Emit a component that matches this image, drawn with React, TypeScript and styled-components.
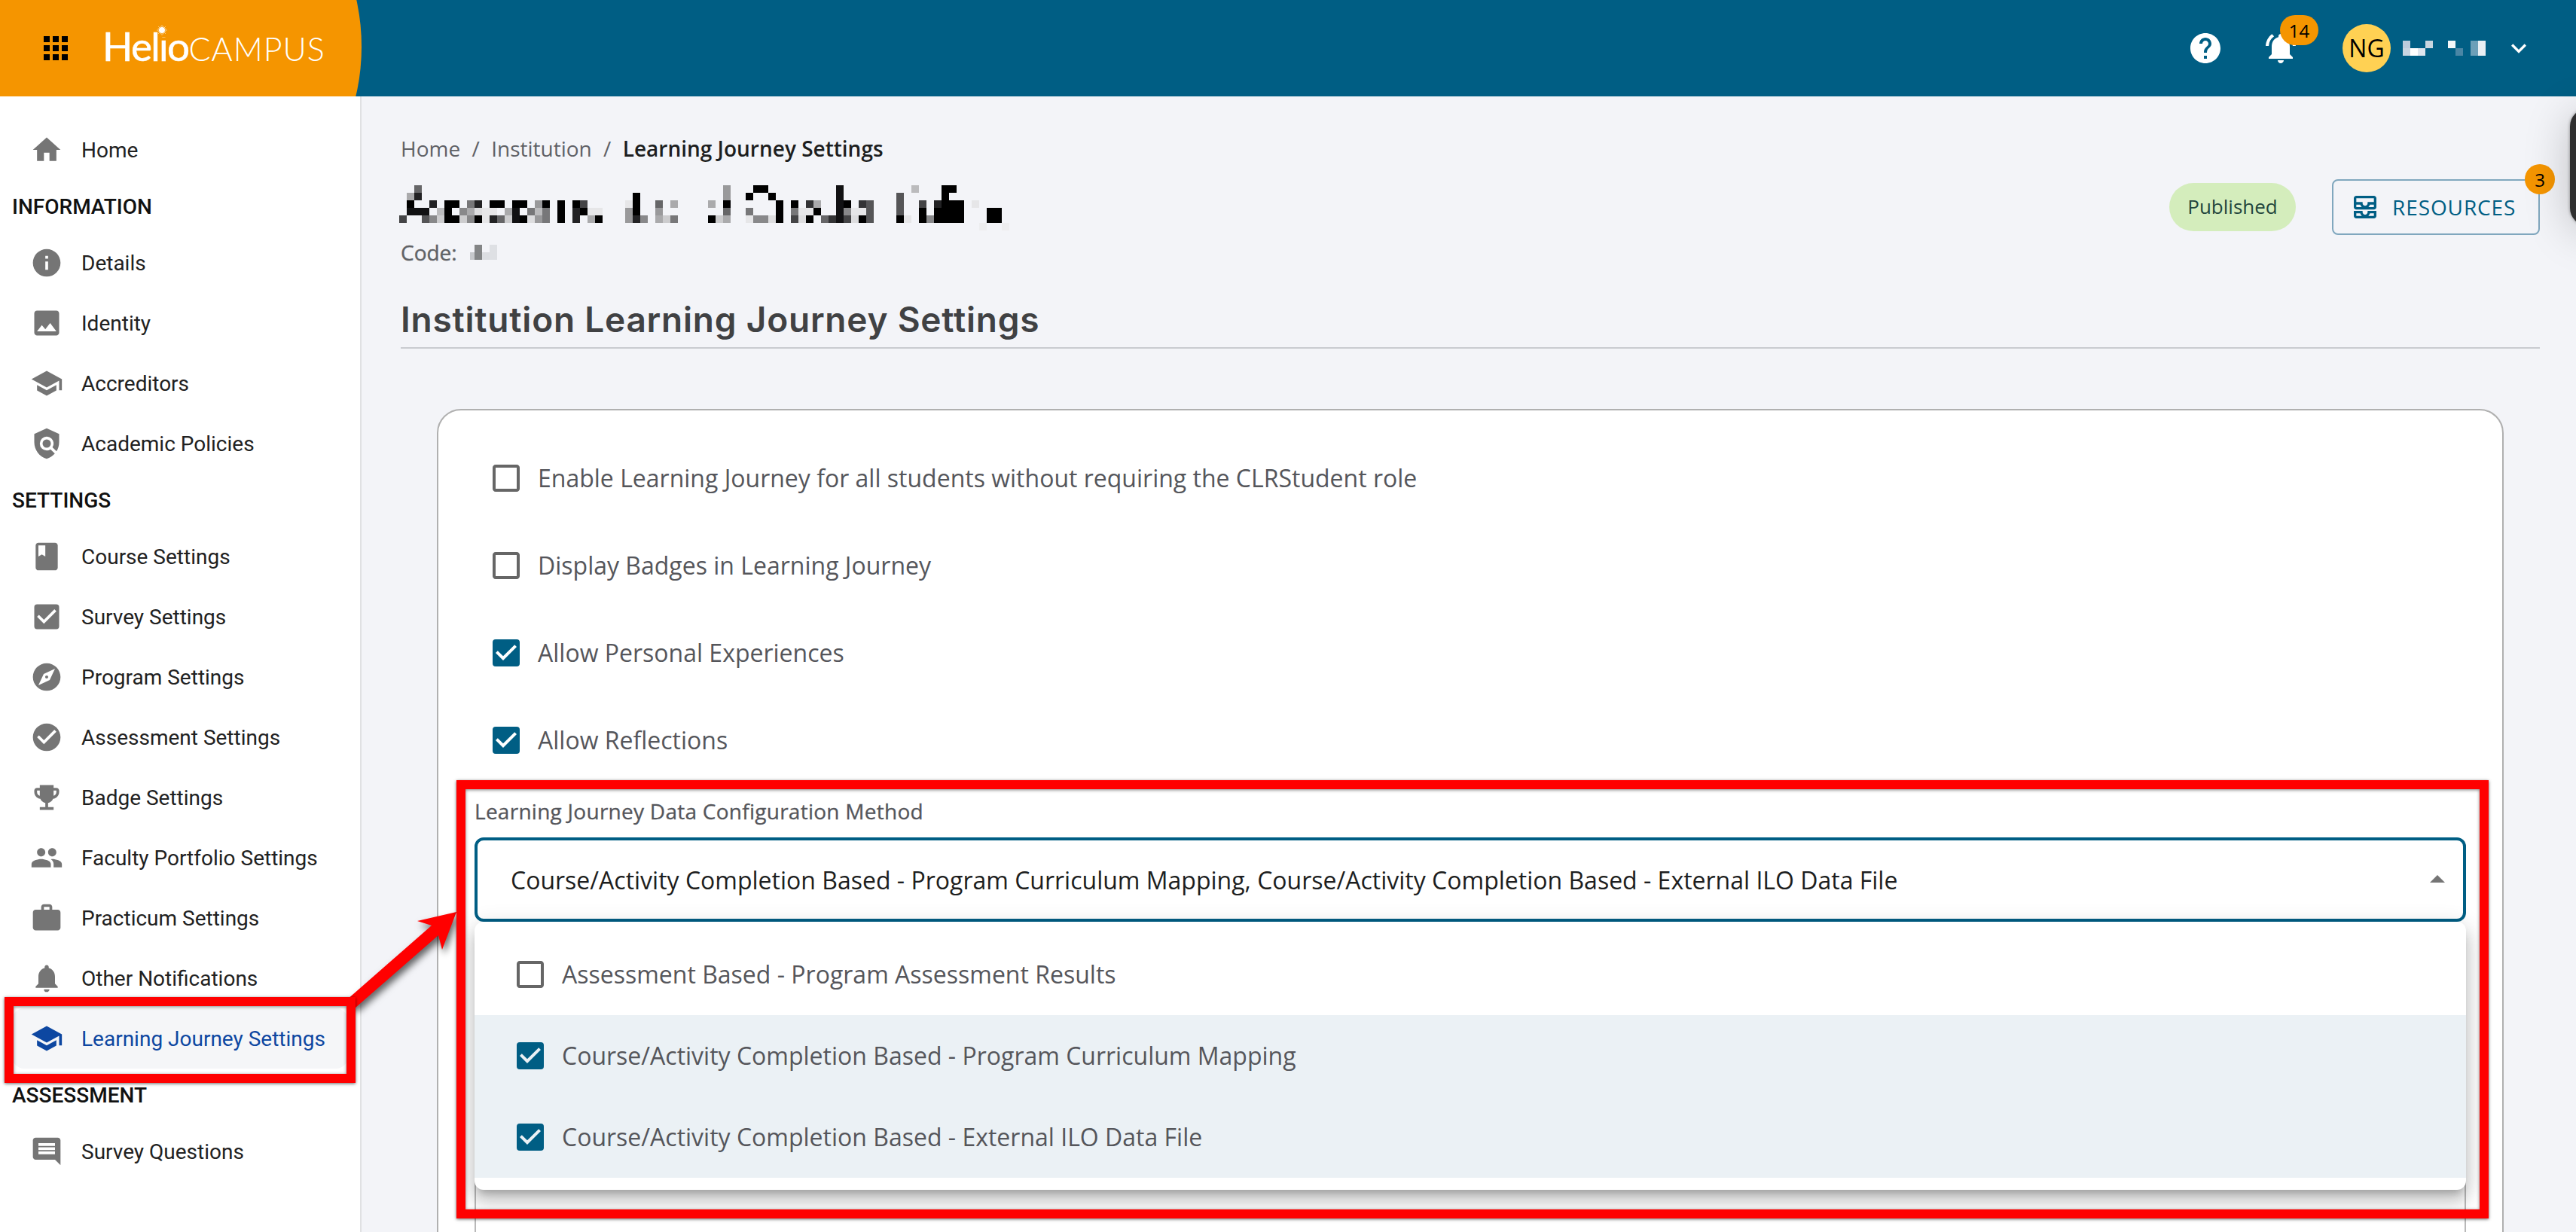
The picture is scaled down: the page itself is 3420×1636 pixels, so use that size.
import React from "react";
import styled, { createGlobalStyle } from "styled-components";
import {
  MdApps,
  MdHome,
  MdInfo,
  MdImage,
  MdSchool,
  MdPolicy,
  MdClass,
  MdCheckBox,
  MdCheckBoxOutlineBlank,
  MdExplore,
  MdCheckCircle,
  MdEmojiEvents,
  MdPeople,
  MdWork,
  MdNotifications,
  MdComment,
  MdHelp,
  MdNotificationsActive,
  MdKeyboardArrowDown,
  MdArrowDropUp,
} from "react-icons/md";
import type { IconType } from "react-icons";

const sans = `"Open Sans", "Noto Sans", sans-serif`;
const roboto = `Roboto, "Liberation Sans", sans-serif`;
const primary = "#005e84";
const accent = "#f59500";

const GlobalStyle = createGlobalStyle`
  *, *::before, *::after { box-sizing: border-box; }
  body { margin: 0; background: #f3f4f8; font-family: ${sans}; }
  svg { display: block; flex: none; }
`;

const Page = styled.div`
  position: relative;
  display: flex;
  flex-direction: column;
  width: 3420px;
  height: 1636px;
  overflow: hidden;
  background: #f3f4f8;
`;

/* ---------- top bar ---------- */

const TopBar = styled.header`
  display: flex;
  justify-content: space-between;
  flex: none;
  height: 128px;
  background: ${primary};
`;

const Brand = styled.div`
  display: flex;
  align-items: center;
  width: 480px;
  padding-left: 50px;
  background: ${accent};
  clip-path: circle(290px at 190px 62px);
`;

const Logo = styled.div`
  position: relative;
  display: flex;
  align-items: baseline;
  margin: 0 0 2px 38px;
  color: #fff;
  font-family: Lato, sans-serif;
  line-height: 64px;
  white-space: nowrap;
`;

const LogoBold = styled.span`
  font-size: 53px;
  font-weight: 400;
  letter-spacing: -1.7px;
  -webkit-text-stroke: 0.6px #fff;
`;

const LogoThin = styled.span`
  margin-left: 0;
  font-size: 43px;
  font-weight: 300;
  letter-spacing: 1px;
`;

const Sun = styled.svg`
  position: absolute;
  left: 68px;
  top: 0;
`;

const Account = styled.div`
  display: flex;
  align-items: center;
  padding-right: 56px;
  color: #fff;
`;

const Bell = styled.div`
  position: relative;
  margin: 0 58px 0 52px;
`;

const Count = styled.span<{ $top: number; $left: number; $width: number }>`
  position: absolute;
  top: ${(p) => p.$top}px;
  left: ${(p) => p.$left}px;
  width: ${(p) => p.$width}px;
  height: 40px;
  border-radius: 20px;
  background: ${accent};
  color: #000;
  font: 24px/41px ${sans};
  letter-spacing: 0;
  text-align: center;
`;

const Avatar = styled.div`
  width: 64px;
  height: 64px;
  margin-right: 16px;
  border-radius: 50%;
  background: #ffd153;
  color: #000;
  font-size: 32px;
  line-height: 64px;
  text-align: center;
`;

const Caret = styled.div`
  margin-left: 24px;
`;

/* ---------- side navigation ---------- */

const Body = styled.div`
  display: flex;
  flex: 1;
  min-height: 0;
`;

const Sidebar = styled.nav`
  width: 480px;
  flex: none;
  padding: 31px 0 0 0;
  border-right: 2px solid #e0e1e3;
  background: #fff;
  font-family: ${roboto};
`;

const NavHeading = styled.h3`
  height: 70px;
  margin: 0;
  padding-left: 16px;
  color: #111;
  font-size: 28px;
  font-weight: 500;
  line-height: 71px;
`;

const NavItem = styled.a<{ $active?: boolean }>`
  display: flex;
  align-items: center;
  gap: 24px;
  height: 80px;
  margin: 0 16px;
  padding-left: 24px;
  border-radius: 16px;
  background: ${(p) => (p.$active ? "#f5f6f8" : "transparent")};
  color: ${(p) => (p.$active ? "#0d47a1" : "#212121")};
  font-size: 28px;
  white-space: nowrap;

  svg {
    color: ${(p) => (p.$active ? "#0d47a1" : "#757575")};
  }
`;

/* ---------- main column ---------- */

const Main = styled.main`
  display: flex;
  flex-direction: column;
  flex: 1;
  min-width: 0;
  padding: 50px 48px 0 52px;
`;

const Crumbs = styled.div`
  display: flex;
  flex: none;
  height: 40px;
  color: #5f6166;
  font-size: 28px;
  line-height: 38px;
`;

const Slash = styled.span`
  width: 41px;
  text-align: center;
`;

const CurrentCrumb = styled.span`
  color: #1d1e20;
  font-weight: 600;
`;

const TitleRow = styled.div`
  display: flex;
  justify-content: space-between;
  flex: none;
  height: 116px;
  margin-top: 20px;
`;

const TitleBlock = styled.div`
  padding-top: 8px;
`;

const NameMosaic = styled.svg`
  margin-left: -2px;
`;

const Code = styled.div`
  display: flex;
  align-items: center;
  gap: 17px;
  height: 38px;
  margin-top: 10px;
  color: #606266;
  font-size: 28px;
  -webkit-text-stroke: 0.4px #606266;
`;

const Actions = styled.div`
  display: flex;
  align-items: center;
  gap: 48px;
  height: 74px;
`;

const Chip = styled.span`
  width: 168px;
  height: 64px;
  border-radius: 32px;
  background: #d4edbc;
  color: #22453c;
  font-size: 26px;
  line-height: 63px;
  text-align: center;
`;

const Resources = styled.button`
  position: relative;
  display: flex;
  align-items: center;
  gap: 16px;
  width: 276px;
  height: 74px;
  padding: 0 0 0 22px;
  border: 2px solid #80a7be;
  border-radius: 8px;
  background: transparent;
  color: ${primary};
  font: 28px ${sans};
  letter-spacing: 0.9px;
`;

const SectionTitle = styled.h2`
  flex: none;
  height: 71px;
  margin: 38px 0 80px;
  border-bottom: 2px solid #c9cbd0;
  color: #404143;
  font-family: Inter, sans-serif;
  font-size: 46px;
  font-weight: 600;
  letter-spacing: 0.78px;
  line-height: 65px;
`;

const Card = styled.section`
  flex: none;
  height: 1200px;
  margin: 0 48px;
  padding: 32px 48px 0;
  border: 2px solid #b0b0b0;
  border-radius: 32px;
  background: #fff;
`;

const Option = styled.label<{ $height: number; $inset: number; $selected?: boolean }>`
  display: flex;
  align-items: center;
  gap: 18px;
  height: ${(p) => p.$height}px;
  padding-left: ${(p) => p.$inset}px;
  background: ${(p) => (p.$selected ? "#ebf1f5" : "transparent")};
  color: #55565b;
  font-size: 32px;
  white-space: nowrap;
`;

const OptionText = styled.span`
  padding-bottom: 2px;
`;

const FieldLabel = styled.div`
  height: 40px;
  margin: 17px 0 14px;
  color: #55565b;
  font-size: 28px;
  letter-spacing: 0.26px;
  line-height: 38px;
  -webkit-text-stroke: 0.3px #55565b;
`;

const Select = styled.div`
  position: relative;
  display: flex;
  align-items: center;
  justify-content: space-between;
  height: 112px;
  padding: 0 10px 0 44px;
  border: 4px solid ${primary};
  border-radius: 12px;
  color: #1d1e20;
  font-size: 32px;
  white-space: nowrap;

  svg {
    color: #757575;
  }
`;

const Menu = styled.div`
  position: absolute;
  top: 108px;
  left: -4px;
  right: -4px;
  padding: 16px 0;
  border-radius: 12px;
  background: #fff;
  box-shadow: 0 10px 10px -6px rgba(0, 0, 0, 0.2), 0 16px 20px 2px rgba(0, 0, 0, 0.14),
    0 6px 28px 4px rgba(0, 0, 0, 0.12);
`;

const NextPanel = styled.div`
  height: 400px;
  margin-top: 330px;
  border: 2px solid #b9b9b9;
  border-radius: 12px;
`;

/* ---------- overlays ---------- */

const SideTab = styled.div`
  position: absolute;
  top: 144px;
  left: 3412px;
  width: 60px;
  height: 156px;
  border-radius: 24px;
  background: #2f2f2f;
  box-shadow: 0 8px 60px rgba(0, 0, 0, 0.22), 0 0 4px rgba(0, 0, 0, 0.4);
`;

const Highlight = styled.div<{ $x: number; $y: number; $w: number; $h: number }>`
  position: absolute;
  left: ${(p) => p.$x}px;
  top: ${(p) => p.$y}px;
  width: ${(p) => p.$w}px;
  height: ${(p) => p.$h}px;
  border: 12px solid #f00;
  box-shadow: 0 1px 4px rgba(0, 0, 0, 0.6), inset 0 1px 4px rgba(0, 0, 0, 0.5);
`;

const Arrow = styled.svg`
  position: absolute;
  left: 440px;
  top: 1190px;
  filter: drop-shadow(3px 6px 5px rgba(0, 0, 0, 0.6));
`;

/* ---------- data ---------- */

type Entry = { label: string; icon: IconType; active?: boolean };

const navigation: { heading?: string; items: Entry[] }[] = [
  { items: [{ label: "Home", icon: MdHome }] },
  {
    heading: "INFORMATION",
    items: [
      { label: "Details", icon: MdInfo },
      { label: "Identity", icon: MdImage },
      { label: "Accreditors", icon: MdSchool },
      { label: "Academic Policies", icon: MdPolicy },
    ],
  },
  {
    heading: "SETTINGS",
    items: [
      { label: "Course Settings", icon: MdClass },
      { label: "Survey Settings", icon: MdCheckBox },
      { label: "Program Settings", icon: MdExplore },
      { label: "Assessment Settings", icon: MdCheckCircle },
      { label: "Badge Settings", icon: MdEmojiEvents },
      { label: "Faculty Portfolio Settings", icon: MdPeople },
      { label: "Practicum Settings", icon: MdWork },
      { label: "Other Notifications", icon: MdNotifications },
      { label: "Learning Journey Settings", icon: MdSchool, active: true },
    ],
  },
  { heading: "ASSESSMENT", items: [{ label: "Survey Questions", icon: MdComment }] },
];

const settings = [
  { label: "Enable Learning Journey for all students without requiring the CLRStudent role", on: false },
  { label: "Display Badges in Learning Journey", on: false },
  { label: "Allow Personal Experiences", on: true },
  { label: "Allow Reflections", on: true },
];

const methods = [
  { label: "Assessment Based - Program Assessment Results", on: false },
  { label: "Course/Activity Completion Based - Program Curriculum Mapping", on: true },
  { label: "Course/Activity Completion Based - External ILO Data File", on: true },
];

/* Pixelated institution name: one string per row, entries are column:grey level (hex). */
const nameRows = [
  "2:6 43:9 47:0 48:0 58:1 68:b 72:0 73:0",
  "1:a 2:2 31:0 43:9 46:0 49:0 58:1 66:5 72:0",
  "1:0 4:2 6:0 7:0 9:7 10:2 12:0 13:0 15:0 16:0 18:9 19:0 21:0 23:0 24:4 30:e 31:0 34:6 36:a 41:a 43:0 50:0 52:0 54:3 55:a 58:1 59:0 61:3 62:5 66:5 69:4 71:2 72:0 73:0 74:0 76:e",
  "1:1 2:1 3:1 5:b 6:0 8:8 9:a 10:d 11:e 12:e 14:a 15:1 17:7 18:b 19:7 21:0 23:2 24:0 25:e 26:e 30:9 31:0 34:9 43:6 46:7 50:0 52:7 53:e 54:e 55:0 58:1 59:8 60:e 61:e 62:5 66:5 69:0 71:0 72:0 73:0 74:0 78:0 79:0",
  "0:4 3:5 4:8 5:c 6:0 7:0 8:c 9:8 10:0 11:e 12:2 13:6 14:c 15:1 16:0 17:d 18:9 19:7 21:0 23:2 25:a 26:0 30:9 31:2 32:8 34:a 35:c 36:7 41:0 42:c 43:a 46:e 47:8 48:8 49:d 50:0 52:4 53:d 54:0 56:6 57:3 58:1 59:4 60:d 61:0 62:5 66:0 67:e 69:0 70:8 71:0 72:0 73:0 74:0 78:0 79:0",
  "77:f 80:f",
];

const nameCells = nameRows.flatMap((row, y) =>
  row.split(" ").map((cell) => {
    const [x, level] = cell.split(":");
    const v = level === "f" ? 237 : level === "e" ? 230 : parseInt(level, 16) * 17;
    return { x: Number(x), y, fill: `rgb(${v},${v},${v === 0 ? 0 : v + 2})` };
  })
);

const userCells: [number, number, number, string][] = [
  [0, 0, 1, "#bccbdb"],
  [0, 1, 1, "#c9d5e1"],
  [1, 1, 1, "#ffffff"],
  [2, 1, 1, "#dfe6ee"],
  [3, 0, 1, "#c9d6e0"],
  [6, 0, 1, "#f4f7f9"],
  [7, 1, 1, "#4a86a5"],
  [9, 0, 2, "#6c9fb8"],
  [10, 0, 2, "#e9eff4"],
];

const Check = ({ on }: { on: boolean }) =>
  on ? <MdCheckBox size={48} color={primary} /> : <MdCheckBoxOutlineBlank size={48} color="#666" />;

const InboxIcon = () => (
  <svg width="40" height="40" viewBox="0 0 24 24" fill="currentColor">
    <path d="M19 3H5c-1.1 0-2 .9-2 2v7c0 1.1.9 2 2 2h14c1.1 0 2-.9 2-2V5c0-1.1-.9-2-2-2zM5 10h3.13c.21.78.67 1.47 1.27 2H5v-2zm14 2h-4.4c.6-.53 1.06-1.22 1.27-2H19v2zm0-4h-5v1c0 1.07-.93 2-2 2s-2-.93-2-2V8H5V5h14v3zm-5 7v1c0 .47-.19.9-.48 1.25-.37.45-.92.75-1.52.75s-1.15-.3-1.52-.75c-.29-.35-.48-.78-.48-1.25v-1H3v4c0 1.1.9 2 2 2h14c1.1 0 2-.9 2-2v-4h-7zm-9 2h3.13c.02.09.06.17.09.25.24.68.65 1.28 1.18 1.75H5v-2zm14 2h-4.4c.54-.47.95-1.07 1.18-1.75.03-.08.07-.17.09-.25H19v2z" />
  </svg>
);

const sunRays = Array.from({ length: 16 }, (_, i) => (i * Math.PI) / 8);

export default function App() {
  return (
    <Page>
      <GlobalStyle />
      <TopBar>
        <Brand>
          <MdApps size={48} color="#000" />
          <Logo>
            <LogoBold>Helio</LogoBold>
            <LogoThin>CAMPUS</LogoThin>
            <Sun width="22" height="22" viewBox="-8 -8 16 16">
              <rect x="-3.4" y="-3" width="8" height="10" fill={accent} />
              <circle r="2.9" fill="#fff" />
              {sunRays.map((a, i) => (
                <line
                  key={i}
                  x1={Math.cos(a) * 3}
                  y1={Math.sin(a) * 3}
                  x2={Math.cos(a) * (i % 2 ? 4.2 : 4.9)}
                  y2={Math.sin(a) * (i % 2 ? 4.2 : 4.9)}
                  stroke="#fff"
                  strokeWidth="0.45"
                />
              ))}
            </Sun>
          </Logo>
        </Brand>
        <Account>
          <MdHelp size={48} />
          <Bell>
            <MdNotificationsActive size={48} />
            <Count $top={-20} $left={23} $width={51}>
              14
            </Count>
          </Bell>
          <Avatar>NG</Avatar>
          <svg width="110" height="20" shapeRendering="crispEdges">
            {userCells.map(([x, y, h, fill], i) => (
              <rect key={i} x={x * 10} y={y * 10} width="10" height={h * 10} fill={fill} />
            ))}
          </svg>
          <Caret>
            <MdKeyboardArrowDown size={40} />
          </Caret>
        </Account>
      </TopBar>

      <Body>
        <Sidebar>
          {navigation.map((group, i) => (
            <React.Fragment key={i}>
              {group.heading && <NavHeading>{group.heading}</NavHeading>}
              {group.items.map(({ label, icon: Icon, active }) => (
                <NavItem key={label} $active={active}>
                  <Icon size={44} />
                  {label}
                </NavItem>
              ))}
            </React.Fragment>
          ))}
        </Sidebar>

        <Main>
          <Crumbs>
            <span>Home</span>
            <Slash>/</Slash>
            <span>Institution</span>
            <Slash>/</Slash>
            <CurrentCrumb>Learning Journey Settings</CurrentCrumb>
          </Crumbs>

          <TitleRow>
            <TitleBlock>
              <NameMosaic width="810" height="60" shapeRendering="crispEdges">
                {nameCells.map((c, i) => (
                  <rect key={i} x={c.x * 10} y={c.y * 10} width="10" height="10" fill={c.fill} />
                ))}
              </NameMosaic>
              <Code>
                Code:
                <svg width="36" height="20" shapeRendering="crispEdges">
                  <rect y="10" width="6" height="10" fill="#c6c8cb" />
                  <rect x="6" width="10" height="20" fill="#838586" />
                  <rect x="16" y="10" width="10" height="10" fill="#dcdee2" />
                  <rect x="26" width="10" height="20" fill="#dee0e4" />
                </svg>
              </Code>
            </TitleBlock>
            <Actions>
              <Chip>Published</Chip>
              <Resources>
                <InboxIcon />
                RESOURCES
                <Count $top={-22} $left={254} $width={40}>
                  3
                </Count>
              </Resources>
            </Actions>
          </TitleRow>

          <SectionTitle>Institution Learning Journey Settings</SectionTitle>

          <Card>
            {settings.map((s) => (
              <Option key={s.label} $height={116} $inset={18}>
                <Check on={s.on} />
                <OptionText>{s.label}</OptionText>
              </Option>
            ))}
            <FieldLabel>Learning Journey Data Configuration Method</FieldLabel>
            <Select>
              Course/Activity Completion Based - Program Curriculum Mapping, Course/Activity Completion
              Based - External ILO Data File
              <MdArrowDropUp size={48} />
              <Menu>
                {methods.map((m) => (
                  <Option key={m.label} $height={108} $inset={50} $selected={m.on}>
                    <Check on={m.on} />
                    <OptionText>{m.label}</OptionText>
                  </Option>
                ))}
              </Menu>
            </Select>
            <NextPanel />
          </Card>
        </Main>
      </Body>

      <SideTab />
      <Arrow width="180" height="170" viewBox="440 1190 180 170">
        <polygon
          points="606,1211 554,1223 573,1229 460,1328 472,1338 582,1242 587,1261"
          fill="#f00"
        />
      </Arrow>
      <Highlight $x={6} $y={1324} $w={466} $h={114} />
      <Highlight $x={606} $y={1036} $w={2698} $h={582} />
    </Page>
  );
}
